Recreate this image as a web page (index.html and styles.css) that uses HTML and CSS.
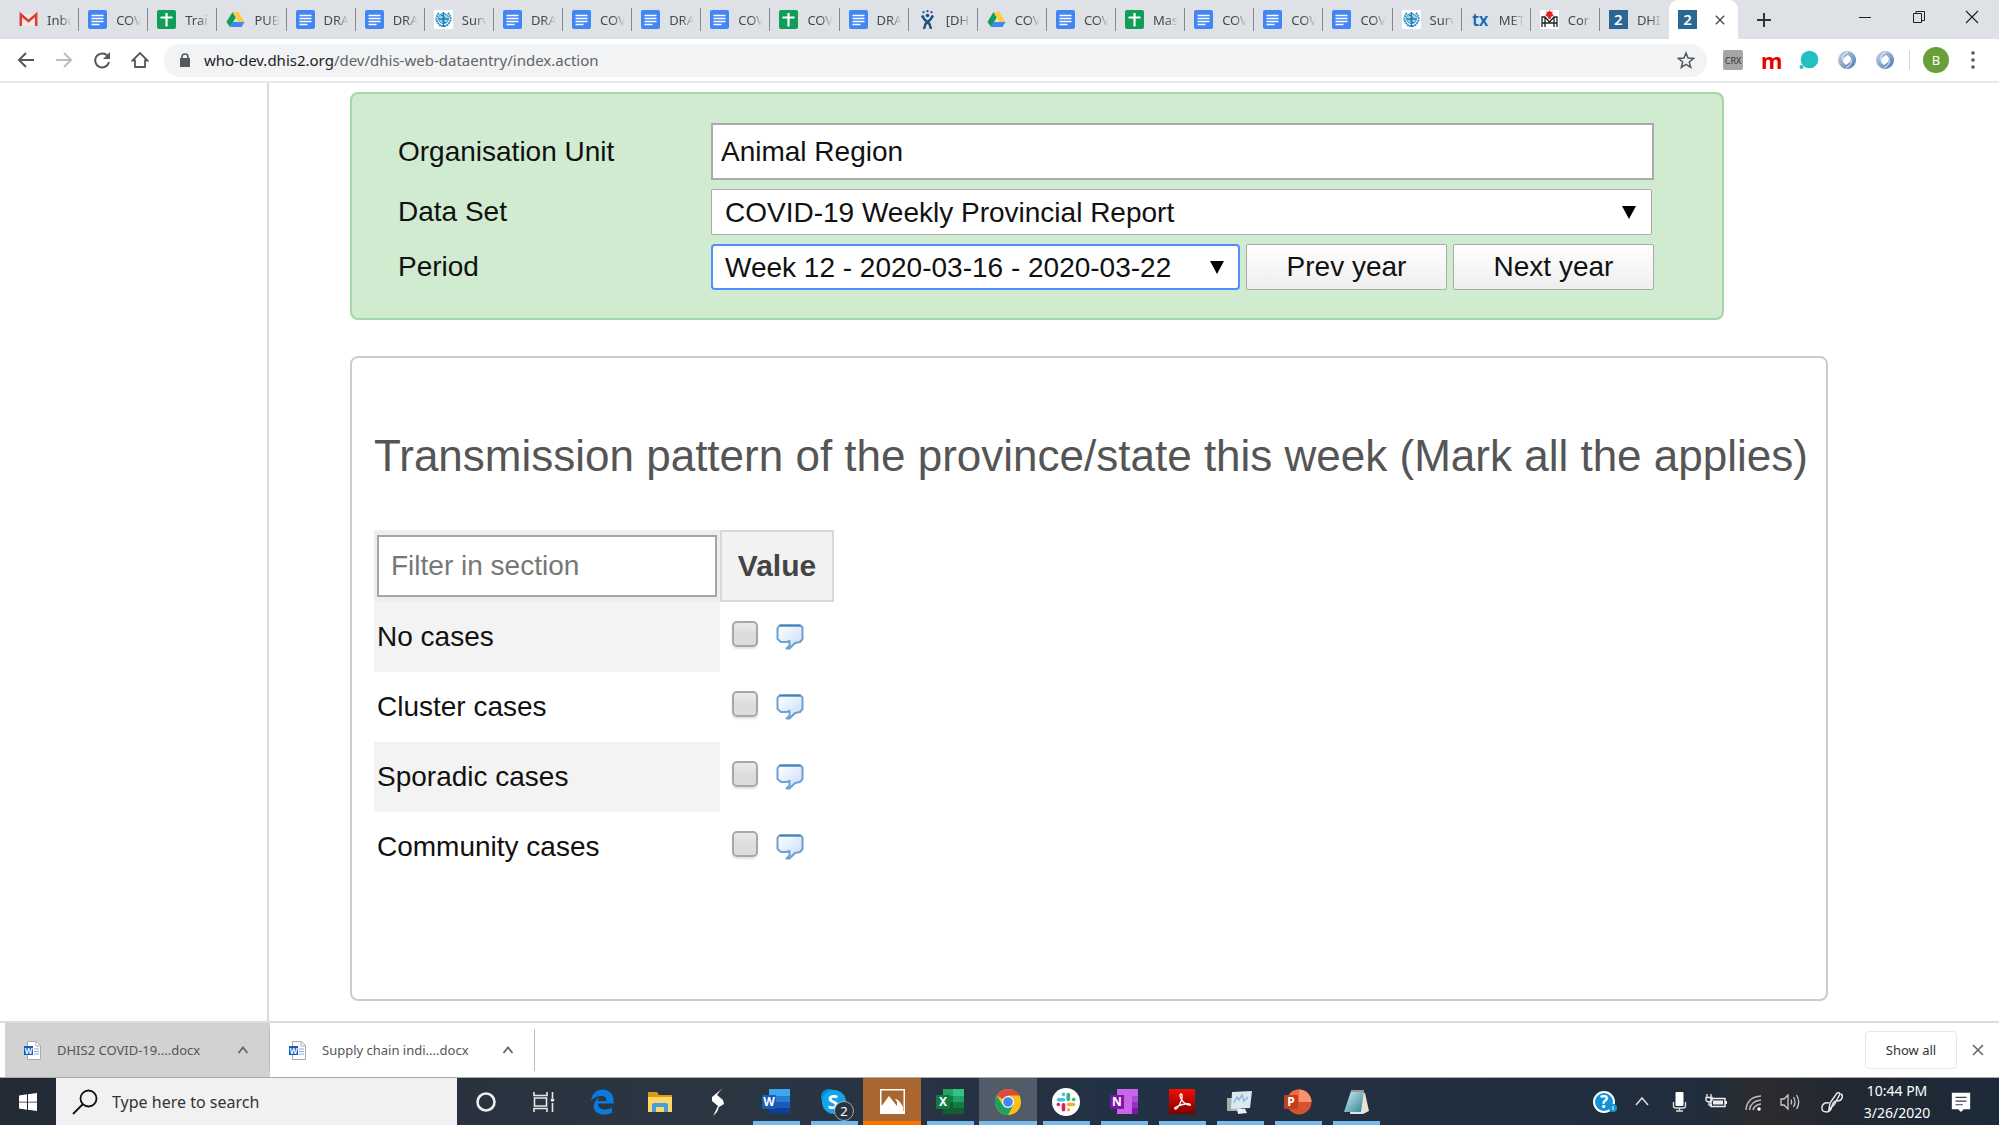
FILE: index.html
```html
<!DOCTYPE html>
<html lang="en">
<head>
<meta charset="utf-8">
<title>Data Entry</title>
<link rel="stylesheet" href="styles.css">
</head>
<body>
<svg class="sprite" aria-hidden="true">
  <defs>
    <linearGradient id="bubbleFill" x1="0" y1="0" x2="1" y2="1"><stop offset="0" stop-color="#fff"/><stop offset="1" stop-color="#c4dcfb"/></linearGradient>
    <linearGradient id="ringFill" x1="0" y1="0" x2="1" y2="1"><stop offset="0" stop-color="#c9d9ea"/><stop offset="1" stop-color="#4a78ad"/></linearGradient>
    <linearGradient id="redFill" x1="0" y1="0" x2="0" y2="1"><stop offset="0" stop-color="#f40f02"/><stop offset="1" stop-color="#7d0000"/></linearGradient>
    <linearGradient id="glassFill" x1="0" y1="0" x2="1" y2="1"><stop offset="0" stop-color="#d5edf2"/><stop offset="1" stop-color="#2d8596"/></linearGradient>
  </defs>
  <symbol id="gmail" viewBox="0 0 19 19"><path d="M2 4h15v12H2z" fill="#f3e9e7"/><path d="M1.800 16V4.500L9.500 11l7.700-6.500V16" fill="none" stroke="#d93f32" stroke-width="2.500"/></symbol>
  <symbol id="doc" viewBox="0 0 19 19"><rect width="19" height="19" rx="2" fill="#4285f4"/><path d="M3.500 5.500h12M3.500 8.500h12M3.500 11.500h12M3.500 14.500h8" stroke="#fff" stroke-width="1.500"/></symbol>
  <symbol id="sheet" viewBox="0 0 19 19"><rect width="19" height="19" rx="2" fill="#0f9d58"/><path d="M3.500 7.500h12M9.500 3v13.500" stroke="#fff" stroke-width="2.200"/></symbol>
  <symbol id="drive" viewBox="0 0 19 19"><path d="M6.500 2 9.800 7.500 4 17 .5 12z" fill="#0f9d58"/><path d="M6.500 2h6L18.500 12h-6z" fill="#ffcd40"/><path d="M6.800 12h11.700L15.500 17H4z" fill="#4285f4"/></symbol>
  <symbol id="who" viewBox="0 0 19 19"><rect width="19" height="19" fill="#fff"/><path d="M5 3Q-1 10 7 16h5Q20 10 14 3" fill="none" stroke="#2f91c5" stroke-width="2" stroke-dasharray="2 .6"/><circle cx="9.500" cy="8.500" r="5" fill="#a6d2e8" stroke="#2f91c5"/><path d="M9.500 2v15M7 5q5 2 2.500 4T12 13M5 9h9" stroke="#1c80b5" fill="none" stroke-width="1.300"/></symbol>
  <symbol id="jira" viewBox="0 0 19 19"><g fill="#205081"><circle cx="5.500" cy="2.200" r="1.100"/><circle cx="9.500" cy="1.200" r="1.100"/><circle cx="13.500" cy="2.200" r="1.100"/><circle cx="9.500" cy="5.500" r="1.800"/></g><path d="M4 5.500 6.500 9.500l5 4.500 1.500 5M15 5.500 12.500 9.500l-5 4.500L6 19" fill="none" stroke="#205081" stroke-width="2.400"/></symbol>
  <symbol id="maple" viewBox="0 0 19 19"><rect width="19" height="19" fill="#fff"/><path d="M2 17V7h3l4.500 5L14 7h3v10M5 7v10M14 7v10M2 13h15" fill="none" stroke="#222" stroke-width="1.300"/><path d="m9.500 0 1.200 2 2-.5-.5 2.500 1.800 1-3 2-.5 2h-2l-.5-2L5 5l1.800-1L6.300 1.500l2 .5z" fill="#e92020"/></symbol>
  <symbol id="ring" viewBox="0 0 20 20"><path fill-rule="evenodd" d="M10 1a9 9 0 1 0 .1 0zM11 5q4 2 2 7l-4 3q-4-3-2-7z" fill="url(#ringFill)"/><path d="M11 2Q3 5 7 13M9 18q8-4 4-11" fill="none" stroke="#eaf2fa"/></symbol>
  <symbol id="page" viewBox="0 0 17 19"><path d="M3.500.500h9l4 4v14h-13z" fill="#fff" stroke="#aaa"/><path d="M12 .500V5h4.500" fill="none" stroke="#aaa"/><path d="M10 8h5M10 10.500h5M10 13h5" stroke="#7bb0ea"/><path d="M0 5h9v9H0z" fill="#185abd"/></symbol>
  <symbol id="up" viewBox="0 0 12 12"><path d="m1.500 9 4.500-5.500L10.500 9" fill="none" stroke="currentColor" stroke-width="1.800"/></symbol>
  <symbol id="cross" viewBox="0 0 12 12"><path d="m1 1 10 10M11 1 1 11" fill="none" stroke="currentColor" stroke-width="1.600"/></symbol>
  <symbol id="bubble" viewBox="0 0 28 26"><path d="M3.500 1.500h21l2 2v11.500l-2.500 3-5 1-5.500 5.500h-3l3-3V17l-3 1H5l-3.500-3v-11z" fill="url(#bubbleFill)" stroke="#6fa0cf" stroke-width="2" stroke-linejoin="round"/><path d="M3.500 1.500h21" stroke="#3f80b8" stroke-width="2"/></symbol>
</svg>

<header class="browser">
  <div class="tabstrip">
    <nav class="tabs" aria-label="Tabs">
      <a class="tab" href="#"><svg><use href="#gmail"/></svg><span>Inbo</span></a>
      <a class="tab" href="#"><svg><use href="#doc"/></svg><span>COV</span></a>
      <a class="tab" href="#"><svg><use href="#sheet"/></svg><span>Trai</span></a>
      <a class="tab" href="#"><svg><use href="#drive"/></svg><span>PUB</span></a>
      <a class="tab" href="#"><svg><use href="#doc"/></svg><span>DRA</span></a>
      <a class="tab" href="#"><svg><use href="#doc"/></svg><span>DRA</span></a>
      <a class="tab" href="#"><svg><use href="#who"/></svg><span>Surv</span></a>
      <a class="tab" href="#"><svg><use href="#doc"/></svg><span>DRA</span></a>
      <a class="tab" href="#"><svg><use href="#doc"/></svg><span>COV</span></a>
      <a class="tab" href="#"><svg><use href="#doc"/></svg><span>DRA</span></a>
      <a class="tab" href="#"><svg><use href="#doc"/></svg><span>COV</span></a>
      <a class="tab" href="#"><svg><use href="#sheet"/></svg><span>COV</span></a>
      <a class="tab" href="#"><svg><use href="#doc"/></svg><span>DRA</span></a>
      <a class="tab" href="#"><svg><use href="#jira"/></svg><span>[DH</span></a>
      <a class="tab" href="#"><svg><use href="#drive"/></svg><span>COV</span></a>
      <a class="tab" href="#"><svg><use href="#doc"/></svg><span>COV</span></a>
      <a class="tab" href="#"><svg><use href="#sheet"/></svg><span>Mas</span></a>
      <a class="tab" href="#"><svg><use href="#doc"/></svg><span>COV</span></a>
      <a class="tab" href="#"><svg><use href="#doc"/></svg><span>COV</span></a>
      <a class="tab" href="#"><svg><use href="#doc"/></svg><span>COV</span></a>
      <a class="tab" href="#"><svg><use href="#who"/></svg><span>Surv</span></a>
      <a class="tab" href="#"><b class="tx">tx</b><span>MET</span></a>
      <a class="tab" href="#"><svg><use href="#maple"/></svg><span>Cor</span></a>
      <a class="tab last" href="#"><b class="dhis">2</b><span>DHI</span></a>
      <a class="tab active" href="#" aria-label="Data Entry"><b class="dhis">2</b><svg class="close"><use href="#cross"/></svg></a>
    </nav>
    <button class="newtab" aria-label="New tab"><svg viewBox="0 0 14 14" width="14" height="14"><path d="M7 0v14M0 7h14" stroke="#333" stroke-width="2"/></svg></button>
    <div class="wincontrols">
      <button aria-label="Minimize"><svg viewBox="0 0 14 14" width="14" height="14"><path d="M1 7.500h12" stroke="#222"/></svg></button>
      <button aria-label="Restore"><svg viewBox="0 0 14 14" width="14" height="14"><path d="M1.500 3.500h8v9h-8zM4 3.500v-2h8.500v9h-3" fill="none" stroke="#222"/></svg></button>
      <button aria-label="Close"><svg viewBox="0 0 14 14" width="14" height="14"><path d="m1 1 12 12M13 1 1 13" stroke="#222" stroke-width="1.200"/></svg></button>
    </div>
  </div>
  <div class="toolbar">
    <button class="nav" aria-label="Back"><svg viewBox="0 0 18 18" width="18" height="18"><path d="M17 9H2m7-7L2 9l7 7" fill="none" stroke="#55585d" stroke-width="2"/></svg></button>
    <button class="nav" aria-label="Forward"><svg viewBox="0 0 18 18" width="18" height="18"><path d="M1 9h15M9 2l7 7-7 7" fill="none" stroke="#bbbdc0" stroke-width="2"/></svg></button>
    <button class="nav" aria-label="Reload"><svg viewBox="0 0 18 18" width="18" height="18"><path d="M15 5.500A7 7 0 1 0 16 11" fill="none" stroke="#55585d" stroke-width="2"/><path d="M17 1v7h-7z" fill="#55585d"/></svg></button>
    <button class="nav" aria-label="Home"><svg viewBox="0 0 18 18" width="18" height="18"><path d="M1.500 9.500 9 2l7.500 7.500H14V16H4V9.500z" fill="none" stroke="#55585d" stroke-width="1.800"/></svg></button>
    <div class="address">
      <svg viewBox="0 0 12 14" width="12" height="14"><path d="M1 5h10v9H1z" fill="#55585d"/><path d="M3 6V4a3 3 0 0 1 6 0v2" fill="none" stroke="#55585d" stroke-width="1.600"/></svg>
      <span class="url"><b>who-dev.dhis2.org</b>/dev/dhis-web-dataentry/index.action</span>
      <svg viewBox="0 0 18 18" width="18" height="18"><path d="m9 2 2 5 5.500.4-4.200 3.500 1.400 5.400L9 13.400l-4.700 2.900 1.400-5.400L1.500 7.400 7 7z" fill="none" stroke="#55585d" stroke-width="1.500"/></svg>
    </div>
    <div class="extensions">
      <button class="crx">CRX</button>
      <button class="em">m</button>
      <button aria-label="Chat extension"><svg viewBox="0 0 20 20" width="20" height="20"><circle cx="10.500" cy="9.500" r="8.800" fill="#21c1c3"/><circle cx="2.500" cy="17" r="2" fill="#21c1c3"/></svg></button>
      <button aria-label="Sync extension"><svg width="20" height="20"><use href="#ring"/></svg></button>
      <button aria-label="Sync extension"><svg width="20" height="20"><use href="#ring"/></svg></button>
    </div>
    <button class="avatar">B</button>
    <button class="menu" aria-label="Menu"><svg viewBox="0 0 4 18" width="4" height="18"><g fill="#55585d"><circle cx="2" cy="2" r="1.800"/><circle cx="2" cy="9" r="1.800"/><circle cx="2" cy="16" r="1.800"/></g></svg></button>
  </div>
</header>

<div class="page">
  <aside class="sidebar"></aside>
  <main class="content">
    <form class="selection">
      <label for="unit">Organisation Unit</label>
      <input id="unit" type="text" value="Animal Region">
      <label for="dataset">Data Set</label>
      <span class="picker dataset"><select id="dataset"><option>COVID-19 Weekly Provincial Report</option></select></span>
      <label for="period">Period</label>
      <div class="period">
        <span class="picker focused"><select id="period"><option>Week 12 - 2020-03-16 - 2020-03-22</option></select></span>
        <button type="button">Prev year</button>
        <button type="button">Next year</button>
      </div>
    </form>

    <section class="entry">
      <h1>Transmission pattern of the province/state this week (Mark all the applies)</h1>
      <table>
        <thead>
          <tr><th class="filter"><input type="text" placeholder="Filter in section" aria-label="Filter in section"></th><th class="value">Value</th></tr>
        </thead>
        <tbody>
          <tr><td><label for="c1">No cases</label></td><td><div class="cell"><input id="c1" type="checkbox"><button aria-label="Comment"><svg><use href="#bubble"/></svg></button></div></td></tr>
          <tr><td><label for="c2">Cluster cases</label></td><td><div class="cell"><input id="c2" type="checkbox"><button aria-label="Comment"><svg><use href="#bubble"/></svg></button></div></td></tr>
          <tr><td><label for="c3">Sporadic cases</label></td><td><div class="cell"><input id="c3" type="checkbox"><button aria-label="Comment"><svg><use href="#bubble"/></svg></button></div></td></tr>
          <tr><td><label for="c4">Community cases</label></td><td><div class="cell"><input id="c4" type="checkbox"><button aria-label="Comment"><svg><use href="#bubble"/></svg></button></div></td></tr>
        </tbody>
      </table>
    </section>
  </main>
</div>

<div class="downloads">
  <button class="download pressed"><svg class="file"><use href="#page"/><text class="glyph tiny" x="4.500" y="12.500">W</text></svg><span>DHIS2 COVID-19....docx</span><svg class="chev"><use href="#up"/></svg></button>
  <button class="download"><svg class="file"><use href="#page"/><text class="glyph tiny" x="4.500" y="12.500">W</text></svg><span>Supply chain indi....docx</span><svg class="chev"><use href="#up"/></svg></button>
  <button class="showall">Show all</button>
  <button class="dismiss" aria-label="Close downloads"><svg width="12" height="12"><use href="#cross"/></svg></button>
</div>

<footer class="taskbar">
  <button class="start" aria-label="Start"><svg viewBox="0 0 18 18" width="18" height="18"><path d="M0 2.500 8 1.300v7.400H0zM9 1.200 18 0v8.700H9zM0 9.500h8v7.300L0 15.600zM9 9.500h9V18l-9-1.200z" fill="#fff"/></svg></button>
  <label class="search"><svg viewBox="0 0 26 26" width="26" height="26"><circle cx="16.500" cy="9.500" r="8" fill="none" stroke="#111" stroke-width="1.800"/><path d="m11 15-10 10" stroke="#111" stroke-width="1.800"/></svg><input type="text" placeholder="Type here to search"></label>
  <nav class="apps" aria-label="Applications">
    <a href="#" aria-label="Cortana"><svg viewBox="0 0 28 28"><circle cx="14" cy="14" r="8.500" fill="none" stroke="#eee" stroke-width="2.600"/></svg></a>
    <a href="#" aria-label="Task view"><svg viewBox="0 0 28 28"><path d="M4 4v3.500h13V4M4 24v-3.500h13V24M4.500 10h12v8h-12zM22.500 4v6M22.500 15v9" fill="none" stroke="#e6e6e6" stroke-width="1.600"/><circle cx="22.500" cy="12" r="1.800" fill="#eee"/></svg></a>
    <a href="#" aria-label="Edge"><svg viewBox="0 0 28 28"><path d="M3 13C4 5 9 1.500 14.500 1.500c7 0 11 5 11 11v3H10c0 4 3 6 7 6 3 0 5-.7 7-2v5c-2 1.500-5 2-8 2C8 26.500 4.500 21 6 16c1-3.500 4-6 6-7-1.500 1.300-2 2.500-2 4h8.500c0-3.500-1.500-5-5-5C9 8 5 10 3 13z" fill="#0a7bdc"/></svg></a>
    <a href="#" aria-label="File explorer"><svg viewBox="0 0 28 28"><path d="M2 4h9l2 3h13v17H2z" fill="#d99b12"/><path d="M2 9h24v15H2z" fill="#ffd768"/><path d="M6 24v-7q0-2 2-2h12q2 0 2 2v7h-4v-5h-8v5z" fill="#3f9edb"/></svg></a>
    <a href="#" aria-label="Stocks"><svg viewBox="0 0 28 28"><path d="M19 0 8 9l0 4 6 5-5 10 4-4 2-5 5-3-1-4-6-5 3-4z" fill="#fff"/></svg></a>
    <a class="open" href="#" aria-label="Word"><svg viewBox="0 0 28 28"><path d="M7 1h21v7H7z" fill="#41a5ee"/><path d="M7 8h21v6H7z" fill="#2b7cd3"/><path d="M7 14h21v6H7z" fill="#185abd"/><path d="M7 20h21v6H7z" fill="#103f91"/><rect y="7" width="14" height="14" rx="1" fill="#185abd"/><text x="7" y="18" class="glyph">W</text></svg></a>
    <a class="open" href="#" aria-label="Skype"><svg viewBox="0 0 28 28"><circle cx="9" cy="9" r="8" fill="#0a8bd2"/><circle cx="19" cy="19" r="8" fill="#0a8bd2"/><circle cx="14" cy="14" r="12" fill="#12a5ec"/><text x="13" y="21" class="glyph big">S</text></svg><span class="count">2</span></a>
    <a class="open photos" href="#" aria-label="Photos"><svg viewBox="0 0 28 28"><path d="M2 1h25v25H2z" fill="#fff"/><path d="M3.500 2.500h22v21L19 13v5L11 8 3.500 18z" fill="#a9672f"/><path d="M17 11q4 0 8 8v5" fill="#fff"/></svg></a>
    <a class="open" href="#" aria-label="Excel"><svg viewBox="0 0 28 28"><path d="M7 1h11v7H7z" fill="#21a366"/><path d="M17 1h11v7H17z" fill="#33c481"/><path d="M7 8h11v6H7z" fill="#107c41"/><path d="M17 8h11v6H17z" fill="#21a366"/><path d="M7 14h21v12H7z" fill="#185c37"/><path d="M17 14h11v6H17z" fill="#107c41"/><rect y="7" width="14" height="14" rx="1" fill="#107c41"/><text x="7" y="18" class="glyph">X</text></svg></a>
    <a class="open current" href="#" aria-label="Chrome"><svg viewBox="0 0 28 28"><circle cx="14" cy="14" r="13" fill="#fbc116"/><path d="M14 14 2.700 7.500A13 13 0 0 1 25.300 7.500H14z" fill="#dd4b3e"/><path d="M2.700 7.500A13 13 0 0 0 14 27l5.500-10L14 14 8 16z" fill="#1aa260"/><circle cx="14" cy="14" r="6" fill="#fff"/><circle cx="14" cy="14" r="4.800" fill="#4285f4"/></svg></a>
    <a class="open" href="#" aria-label="Slack"><svg viewBox="0 0 28 28"><circle cx="14" cy="14" r="14" fill="#fff"/><g fill="none" stroke-width="3.600" stroke-linecap="round"><path d="M11.500 11.800h-5M11.500 6.300v.1" stroke="#36c5f0"/><path d="M16.300 6.500v5M21.800 11.500h-.1" stroke="#2eb67d"/><path d="M16.500 16.500h5M16.500 21.800v-.1" stroke="#ecb22e"/><path d="M11.500 16.800v5M6.300 16.500h.1" stroke="#e01e5a"/></g></svg></a>
    <a class="open" href="#" aria-label="OneNote"><svg viewBox="0 0 28 28"><path d="M7 1h21v25H7z" fill="#ca64ea"/><path d="M22 8h6v6h-6z" fill="#ae4bd5"/><path d="M22 14h6v6h-6z" fill="#9332bf"/><path d="M22 20h6v6h-6z" fill="#7719aa"/><rect y="7" width="14" height="14" rx="1" fill="#7719aa"/><text x="7" y="18" class="glyph">N</text></svg></a>
    <a class="open" href="#" aria-label="Acrobat"><svg viewBox="0 0 28 28"><path d="M1 1h26v25H1z" fill="url(#redFill)"/><path d="M13 6c-3 0 1 9 7 11 4 1 3-2-3-1S5 20 7 21s6-6 7-11q.5-4-1-4z" fill="none" stroke="#fff" stroke-width="1.300"/></svg></a>
    <a class="open" href="#" aria-label="Monitor"><svg viewBox="0 0 28 28"><path d="M1 10h14v13H1z" fill="#a9adb0"/><path d="M6 4 26 3l-2 17-19 1z" fill="#dce8f0"/><path d="m8 15 3-6 2 3 3-5 2 6 4-4" fill="none" stroke="#8bbce0" stroke-width="1.500"/><path d="M11 21h8l2 4-9 1z" fill="#eee"/></svg></a>
    <a class="open" href="#" aria-label="PowerPoint"><svg viewBox="0 0 28 28"><circle cx="15" cy="14" r="12.500" fill="#d35230"/><path d="M15 1.500A12.500 12.500 0 0 1 27.500 14H15z" fill="#ff8f6b"/><path d="M15 1.500V14H2.500A12.500 12.500 0 0 1 15 1.500z" fill="#ed6c47"/><rect y="7" width="14" height="14" rx="1" fill="#c43e1c"/><text x="7" y="18" class="glyph">P</text></svg></a>
    <a class="open" href="#" aria-label="Notepad"><svg viewBox="0 0 28 28"><path d="m10 3 13 2 4 18-6 3H8z" fill="#e8e3d5"/><path d="M9 3h13l-3 21H2z" fill="url(#glassFill)"/><path d="M9 3h13" stroke="#999" stroke-width="2"/></svg></a>
  </nav>
  <div class="tray">
    <button aria-label="Help"><svg viewBox="0 0 24 24"><circle cx="11" cy="12" r="10" fill="#1293d8" stroke="#fff" stroke-width="2"/><text x="11" y="18" class="glyph help">?</text><circle cx="20" cy="18" r="4" fill="#1293d8"/><path d="M20 16v4" stroke="#fff"/></svg></button>
    <button aria-label="Hidden icons"><svg viewBox="0 0 24 24"><path d="m6 15 6-7 6 7" fill="none" stroke="#ddd" stroke-width="1.500"/></svg></button>
    <button aria-label="Microphone"><svg viewBox="0 0 24 24"><rect x="8.500" y="2" width="8" height="14" rx="1" fill="#fff"/><path d="M6.500 12v4q0 2 2 2h8q2 0 2-2v-4M12.500 18v3M9 21h7" fill="none" stroke="#ddd" stroke-width="1.400"/></svg></button>
    <button aria-label="Battery"><svg viewBox="0 0 24 24"><path d="M7 8.500h14v8H7z" fill="none" stroke="#eee" stroke-width="1.500"/><path d="M9 10.500h10v4H9zM21 11h2v3h-2z" fill="#eee"/><path d="M3 4v4M7 4v4M2 7.500h6v3q-3 3-6 0zM5 11v4h3" fill="none" stroke="#eee" stroke-width="1.300"/></svg></button>
    <button aria-label="Network"><svg viewBox="0 0 24 24"><path d="M5 20Q6 7 20 6M8.500 20q1-9 11.500-10M12 20q1-5 8-6" fill="none" stroke="#bbb" stroke-width="1.500"/><circle cx="18" cy="19" r="1.800" fill="#fff"/></svg></button>
    <button aria-label="Volume"><svg viewBox="0 0 24 24"><path d="M3 9h3l4-4v14l-4-4H3zM13 9.500q1.500 2.500 0 5M15.500 7q3 5 0 10M18.500 5q4.500 7 0 14" fill="none" stroke="#ccc" stroke-width="1.300"/></svg></button>
    <button class="pen" aria-label="Pen"><svg viewBox="0 0 24 24"><path d="m9 19 1-6 7-10q2-1 3 1l-6 11zM9 13q-6-1-7 4t5 5q4-1 5-6t5-5 5-3-1-4" fill="none" stroke="#e6e6e6" stroke-width="1.500"/></svg></button>
    <button class="clock"><span>10:44 PM</span><span>3/26/2020</span></button>
    <button class="notes" aria-label="Notifications"><svg viewBox="0 0 24 24"><path d="M2 2h20v18h-7l-3 3-3-3H2z" fill="#fff"/><path d="M6 7h12M6 11h12M6 15h8" stroke="#39424e" stroke-width="1.300"/></svg></button>
  </div>
</footer>
</body>
</html>
```
FILE: styles.css
```css
* { box-sizing: border-box; }

body {
  margin: 0;
  min-height: 100vh;
  display: flex;
  flex-direction: column;
  background: #fff;
  color: #111;
  font-family: "Noto Sans", "Open Sans", sans-serif;
  font-size: 13px;
}

button, input, select {
  font: inherit;
  color: inherit;
  margin: 0;
}

button {
  border: 0;
  padding: 0;
  background: none;
}

a { color: inherit; text-decoration: none; }
svg { display: block; flex: none; }
.sprite { position: absolute; width: 0; height: 0; }

/* Tab strip */
.tabstrip {
  display: flex;
  height: 39px;
  padding-left: 10px;
  background: #dee1e6;
}
.tabs { display: flex; flex: 1; min-width: 0; }
.tab {
  flex: 1 1 0;
  min-width: 0;
  display: flex;
  align-items: center;
  gap: 9px;
  padding: 0 6px 0 9px;
  color: #45494d;
  background: linear-gradient(#85888c, #85888c) right center / 1px 23px no-repeat;
}
.tab svg, .tab b { width: 19px; height: 19px; }
.tab span {
  flex: 1;
  overflow: hidden;
  white-space: nowrap;
  -webkit-mask-image: linear-gradient(90deg, #000 50%, transparent 95%);
  mask-image: linear-gradient(90deg, #000 50%, transparent 95%);
}
.tab b { line-height: 19px; text-align: center; font-weight: 600; }
.tab .tx { color: #0f68b4; font-size: 17px; }
.tab .dhis { background: #2c6693; color: #fff; font-size: 15px; }
.tab.last { background: none; }
.tab.active {
  background: #fff;
  border-radius: 9px 9px 0 0;
  gap: 18px;
}
.tab .close { width: 10px; height: 10px; }
.newtab { width: 52px; display: grid; place-items: center; }
.wincontrols { display: flex; width: 209px; padding-left: 48px; height: 34px; }
.wincontrols button { flex: 1; display: grid; place-items: center; }

/* Toolbar */
.toolbar {
  display: flex;
  align-items: center;
  height: 44px;
  padding: 0 20px 0 7px;
  border-bottom: 2px solid #e6e8eb;
}
.nav { width: 38px; height: 38px; display: grid; place-items: center; }
.address {
  flex: 1;
  display: flex;
  align-items: center;
  gap: 13px;
  height: 33px;
  margin-left: 5px;
  padding: 0 12px 0 15px;
  border-radius: 16px;
  background: #f1f3f4;
}
.url { flex: 1; color: #5f6368; font-size: 15px; }
.url b { font-weight: 400; color: #202124; }
.extensions { display: flex; gap: 18px; padding: 0 14px 0 16px; border-right: 1px solid #d5d7da; }
.extensions button { width: 20px; height: 20px; }
.extensions .crx { border-radius: 2px; background: #a5a5a5; color: #333; font-size: 9px; }
.extensions .em { color: #e60000; font-size: 22px; font-weight: 700; line-height: 14px; }
.avatar {
  width: 26px;
  height: 26px;
  margin: 0 18px 0 13px;
  border-radius: 50%;
  background: #689f38;
  color: #fff;
}
.menu { width: 12px; display: grid; place-items: center; }

/* Page */
.page {
  flex: 1;
  display: flex;
  font-family: "Liberation Sans", Arial, sans-serif;
  font-size: 28px;
}
.sidebar { width: 269px; flex: none; border-right: 2px solid #ddd; }
.content { flex: 1; padding: 9px 80px 20px 81px; }
.selection {
  display: grid;
  grid-template-columns: 313px 1fr;
  grid-template-rows: 57px 46px 46px;
  gap: 9px 0;
  align-items: center;
  max-width: 1374px;
  padding: 29px 68px 28px 46px;
  border: 2px solid #a5d6a7;
  border-radius: 8px;
  background: #d0ebd0;
}
.selection input {
  width: 100%;
  height: 100%;
  padding: 0 8px;
  border: 2px solid #aaa;
  background: #fff;
}
.picker { position: relative; display: block; height: 100%; }
.picker.dataset { margin-right: 2px; }
.picker::after {
  content: "";
  position: absolute;
  right: 16px;
  top: 17px;
  border: 7px solid transparent;
  border-top: 13px solid #000;
  border-bottom: 0;
  pointer-events: none;
}
.picker select {
  appearance: none;
  width: 100%;
  height: 100%;
  padding: 0 13px;
  border: 1px solid #aaa;
  border-radius: 2px;
  background: #fff;
}
.picker.focused select { border: 2px solid #4d90fe; border-radius: 4px; padding: 0 12px; }
.period { display: flex; gap: 6px; height: 100%; }
.period .picker { flex: 1; }
.period button {
  width: 201px;
  border: 1px solid #aaa;
  border-radius: 2px;
  background: linear-gradient(#fff, #eee);
}

.entry {
  max-width: 1478px;
  margin-top: 36px;
  padding: 72px 12px 117px 22px;
  border: 2px solid #ccc;
  border-radius: 8px;
}
.entry h1 {
  margin: 0 0 48px;
  color: #555;
  font-size: 44px;
  font-weight: 400;
  line-height: 52px;
}
.entry table { border-collapse: separate; border-spacing: 0; }
.entry th, .entry td { height: 70px; padding: 0; text-align: left; }
.entry .filter { width: 346px; height: 72px; padding: 0 3px; background: #eee; }
.filter input {
  display: block;
  width: 100%;
  height: 62px;
  padding: 0 12px;
  border: 2px solid #a5a5a5;
  background: #fff;
  font-weight: 400;
}
.filter input::placeholder { color: #777; }
.entry .value {
  width: 114px;
  border: 2px solid #d8d8d8;
  background: #f2f2f2;
  color: #444;
  font-size: 30px;
  text-align: center;
}
.entry td:first-child { padding-left: 3px; }
.entry tbody tr:nth-child(odd) td:first-child { background: #f3f3f3; }
.cell { display: flex; align-items: center; gap: 18px; padding-left: 12px; }
.cell input {
  appearance: none;
  width: 26px;
  height: 26px;
  margin-bottom: 6px;
  border: 2px solid #a8a8a8;
  border-radius: 5px;
  background: linear-gradient(#ebebeb, #dcdcdc 50%);
  box-shadow: 0 2px 2px #e2e2e2;
}
.cell svg { width: 28px; height: 26px; }

/* Downloads */
.downloads {
  display: flex;
  align-items: center;
  height: 57px;
  padding: 0 15px 0 5px;
  border-top: 2px solid #ddd;
  border-bottom: 1px solid #aaa;
}
.download {
  display: flex;
  align-items: center;
  width: 265px;
  height: 100%;
  padding: 0 21px 0 19px;
  color: #555;
  text-align: left;
  background: linear-gradient(#bbb, #bbb) right center / 1px 42px no-repeat;
}
.download.pressed { background-color: #d2d2d2; }
.download span { flex: 1; padding-left: 16px; white-space: nowrap; }
.download .file { width: 17px; height: 19px; }
.download .chev { width: 12px; height: 12px; color: #666; }
.showall {
  width: 92px;
  height: 38px;
  margin-left: auto;
  border: 1px solid #e6e6e6;
  border-radius: 4px;
  color: #333;
}
.dismiss { margin-left: 15px; color: #666; }

/* Taskbar */
.taskbar {
  display: flex;
  height: 47px;
  background: linear-gradient(90deg, #222a35, #2c3642 35%, #233144 55%, #1f2d3d 85%, #2c2c2f 88%, #222831 92%, #1c2b3a);
  color: #fff;
}
.start { width: 56px; display: grid; place-items: center; }
.search {
  display: flex;
  align-items: center;
  gap: 14px;
  width: 401px;
  padding-left: 16px;
  background: #f1f1f1;
}
.search input { flex: 1; padding: 0; border: 0; background: none; font-size: 16px; }
.search input::placeholder { color: #333; opacity: 1; }
.apps { display: flex; }
.apps a {
  position: relative;
  width: 58px;
  display: grid;
  place-items: center;
}
.apps svg { width: 28px; height: 28px; }
.apps .open::after {
  content: "";
  position: absolute;
  left: 6px;
  right: 5px;
  bottom: 0;
  height: 4px;
  background: #76b9ed;
}
.apps .photos { background: #a9672f; }
.apps .photos::after { left: 0; right: 0; background: #ff7300; }
.apps .current { background: #525c69; }
.apps .current::after { left: 0; right: 0; }
.glyph {
  font-size: 12px;
  font-weight: 700;
  text-anchor: middle;
  fill: #fff;
}
.glyph.big { font-size: 20px; }
.glyph.help { font-size: 17px; }
.glyph.tiny { font-size: 8px; }
.count {
  position: absolute;
  right: 9px;
  bottom: 4px;
  width: 20px;
  height: 20px;
  border: 1px solid #aaa;
  border-radius: 50%;
  background: #2a3441;
  line-height: 18px;
  text-align: center;
}
.tray { display: flex; margin-left: auto; padding-right: 15px; }
.tray button { width: 37px; display: grid; place-items: center; }
.tray svg { width: 24px; height: 24px; }
.tray .pen { width: 48px; }
.tray .clock { width: 82px; align-content: center; line-height: 22px; font-size: 14px; white-space: nowrap; }
.tray .notes { width: 46px; }
.tray .notes svg { width: 22px; height: 22px; }
```
